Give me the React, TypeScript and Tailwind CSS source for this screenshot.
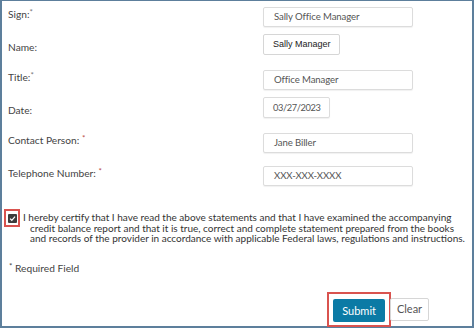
const Req = ({ red = false }: { red?: boolean }) => (
  <span className={`relative -top-[3px] text-[8px] ${red ? "text-[#b94a48]" : "text-[#777]"}`}>*</span>
);

const Label = ({ children, top = 0 }: { children: React.ReactNode; top?: number }) => (
  <div
    className={`w-[255px] shrink-0 text-[10.2px] leading-[14px] text-[#444] ${top === 6 ? "mt-[6px]" : "mt-0"}`}
  >
    {children}
  </div>
);

const Field = ({ value, w = "w-[150px]", h = "h-[20px]" }: { value: string; w?: string; h?: string }) => (
  <div
    className={`${w} ${h} flex items-center pl-[10px] border border-[#dcdcdc] rounded-[2px] bg-white shadow-[0_1px_1px_rgba(0,0,0,0.06)] text-[9.6px] tracking-[-0.1px] text-[#555] whitespace-nowrap`}
  >
    {value}
  </div>
);

const App = () => {
  return (
    <div className="w-[474px] h-[328px] bg-white overflow-hidden font-['Lato',sans-serif]">
      <div className="w-full h-full border-l-2 border-r-2 border-b-2 border-t border-[#5d7f9c] flex flex-col pl-[6px] pt-[6px]">
        {/* sign */}
        <div className="flex items-start h-[20px]">
          <Label>
            Sign:<Req />
          </Label>
          <Field value="Sally Office Manager" />
        </div>

        {/* name */}
        <div className="flex items-start h-[21px] mt-[7px]">
          <Label top={6}>Name:</Label>
          <div className="h-[21px] w-[77px] flex items-center pl-[9px] border border-[#d6d6d6] rounded-[2px] bg-white font-['Liberation_Sans',Arial,sans-serif] text-[9px] text-[#222] whitespace-nowrap">
            Sally Manager
          </div>
        </div>

        {/* title */}
        <div className="flex items-start h-[20px] mt-[15px]">
          <Label>
            Title:<Req />
          </Label>
          <Field value="Office Manager" />
        </div>

        {/* date */}
        <div className="flex items-start h-[21px] mt-[7px]">
          <Label top={6}>Date:</Label>
          <div className="w-[67px] h-[21px] flex items-center pl-[9px] border border-[#dcdcdc] rounded-[2px] bg-white shadow-[0_1px_1px_rgba(0,0,0,0.06)] text-[9.3px] tracking-[-0.4px] text-[#555] whitespace-nowrap">
            03/27/2023
          </div>
        </div>

        {/* contact */}
        <div className="flex items-start h-[20px] mt-[15px]">
          <Label>
            Contact Person: <Req red />
          </Label>
          <Field value="Jane Biller" />
        </div>

        {/* phone */}
        <div className="flex items-start h-[20px] mt-[13px]">
          <Label>
            Telephone Number: <Req red />
          </Label>
          <Field value="XXX-XXX-XXXX" />
        </div>

        {/* certify */}
        <div className="flex items-start mt-[23px] -ml-[4px]">
          <div className="w-[16px] h-[18px] border-2 border-[#d9534f] flex items-center justify-center shrink-0">
            <div className="w-[9px] h-[9px] bg-[#3c3c3c] rounded-[1px] flex items-center justify-center">
              <svg width="7" height="7" viewBox="0 0 10 10">
                <path d="M1.5 5.2 L4 7.6 L8.6 2.4" fill="none" stroke="#fff" strokeWidth="1.8" />
              </svg>
            </div>
          </div>
          <p className="ml-[3px] mt-[3px] pl-[7px] -indent-[7px] text-[10px] leading-[10.5px] text-[#333] whitespace-nowrap">
            I hereby certify that I have read the above statements and that I have examined the accompanying
            <br />
            credit balance report and that it is true, correct and complete statement prepared from the books
            <br />
            and records of the provider in accordance with applicable Federal laws, regulations and instructions.
          </p>
        </div>

        {/* required */}
        <div className="mt-[17px] ml-[1px] text-[10.2px] text-[#444] leading-[14px]">
          <span className="relative -top-[3px] text-[8px]">*</span> Required Field
        </div>

        {/* buttons */}
        <div className="flex justify-end items-center mt-[16px] pr-[43px]">
          <div className="border-2 border-[#d9534f] py-[3px] px-[4px]">
            <button className="h-[23px] px-[9px] bg-[#0b7aa5] text-white text-[11px] rounded-[2px]">
              Submit
            </button>
          </div>
          <button className="h-[23px] w-[39px] -ml-[1px] border border-[#d6d6d6] bg-white text-[#555] text-[11px] rounded-[2px]">
            Clear
          </button>
        </div>
      </div>
    </div>
  );
};

export default App;
